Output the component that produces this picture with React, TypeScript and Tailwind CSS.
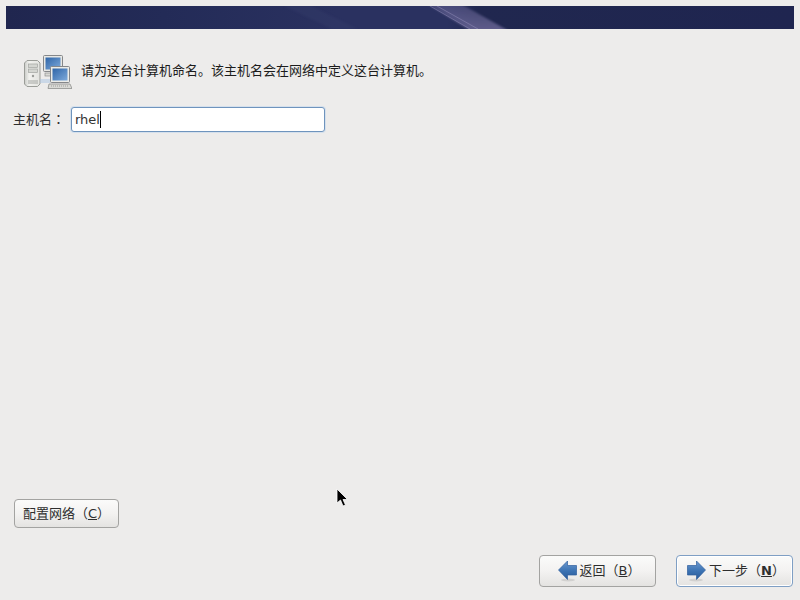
const fontStack = "font-['DejaVu_Sans','Noto_Sans_CJK_SC',sans-serif]";

function Banner() {
  return (
    <div className="mx-[6px] mt-[6px] h-[23px] bg-[#20264f] shrink-0">
      <svg width="788" height="23" viewBox="0 0 788 23" className="block">
        <defs>
          <linearGradient id="bannerGlow" x1="0" x2="1" y1="0" y2="0">
            <stop offset="0" stopColor="#20264f" />
            <stop offset="0.2" stopColor="#232b57" />
            <stop offset="0.42" stopColor="#2a3160" />
            <stop offset="0.56" stopColor="#2a3160" />
            <stop offset="0.6" stopColor="#20274f" />
            <stop offset="1" stopColor="#1f2550" />
          </linearGradient>
          <linearGradient id="streak" x1="0" x2="0" y1="0" y2="1">
            <stop offset="0" stopColor="#7d77a8" stopOpacity="0.5" />
            <stop offset="1" stopColor="#8079ab" stopOpacity="0.95" />
          </linearGradient>
          <filter id="soft" x="-20%" y="-20%" width="140%" height="140%">
            <feGaussianBlur stdDeviation="0.9" />
          </filter>
        </defs>
        <rect width="788" height="23" fill="url(#bannerGlow)" />
        <polygon points="278,0 305,0 352,23 326,23" fill="#363c6b" opacity="0.4" filter="url(#soft)" />
        <polygon points="421,-2 455,-2 503,25 465,25" fill="url(#streak)" opacity="0.7" filter="url(#soft)" />
        <path d="M424 0L464 23M431 0L472 23" stroke="#a49ec9" strokeWidth="1" opacity="0.4" />
      </svg>
    </div>
  );
}

function NetworkIcon() {
  return (
    <svg width="50" height="38" viewBox="0 0 50 38" className="shrink-0">
      <defs>
        <linearGradient id="tower" x1="0" x2="1" y1="0" y2="0">
          <stop offset="0" stopColor="#c9cbc7" />
          <stop offset="0.3" stopColor="#f2f2ef" />
          <stop offset="1" stopColor="#e2e3df" />
        </linearGradient>
        <linearGradient id="screen" x1="0" x2="1" y1="0" y2="1">
          <stop offset="0" stopColor="#2f65a8" />
          <stop offset="1" stopColor="#7eaadb" />
        </linearGradient>
      </defs>
      {/* tower */}
      <path d="M2.5 11 L5 8.5 H15.5 L18 11 V32 L15.5 34.5 H5 L2.5 32 Z" fill="url(#tower)" stroke="#9b9d98" />
      <rect x="6.5" y="12" width="9" height="3.5" fill="#d4d6d1" stroke="#a2a4a0" strokeWidth="0.7" />
      <rect x="6.5" y="17" width="9" height="3.5" fill="#d4d6d1" stroke="#a2a4a0" strokeWidth="0.7" />
      <circle cx="11" cy="24" r="1.2" fill="#9a9c98" />
      <path d="M7 28V32M9 28V32M11 28V32M13 28V32M15 28V32" stroke="#a4a6a2" />
      {/* cables */}
      <path d="M18 28H28M18 30H28" stroke="#a9c4e4" strokeWidth="1.2" />
      {/* back monitor */}
      <rect x="21.5" y="3.5" width="19" height="16" rx="1" fill="#e8e8e4" stroke="#85878a" />
      <rect x="23.5" y="5.5" width="15" height="12" fill="url(#screen)" />
      <rect x="23" y="21" width="8" height="3" fill="#d8d8d4" stroke="#909290" strokeWidth="0.7" />
      {/* front monitor */}
      <rect x="28.5" y="14.5" width="19" height="16" rx="1" fill="#ecece8" stroke="#85878a" />
      <rect x="30.5" y="16.5" width="15" height="12" fill="url(#screen)" />
      <path d="M27 32H48L50 36.5H26Z" fill="#d9d9d5" stroke="#8f918e" strokeWidth="0.8" />
      <path d="M29 34H47" stroke="#8f918e" strokeWidth="0.8" strokeDasharray="1 1" />
    </svg>
  );
}

function ArrowIcon({ dir }: { dir: "left" | "right" }) {
  return (
    <svg width="19" height="22" viewBox="0 0 19 22" className={dir === "left" ? "shrink-0" : "shrink-0 -scale-x-100"}>
      <defs>
        <linearGradient id={`arrow-${dir}`} x1="0" x2="0" y1="0" y2="1">
          <stop offset="0" stopColor="#6d9ad0" />
          <stop offset="0.55" stopColor="#3b72b2" />
          <stop offset="1" stopColor="#2a5a98" />
        </linearGradient>
      </defs>
      <ellipse cx="10" cy="20" rx="7" ry="1.5" fill="#000" opacity="0.1" />
      <path d="M0.5 10 L9.5 1 V5.5 H18.5 V15 H9.5 V19.5 Z" fill={`url(#arrow-${dir})`} stroke="#2f5f9d" strokeWidth="0.7" />
    </svg>
  );
}

function GtkButton({
  children,
  className,
}: {
  children: React.ReactNode;
  className: string;
}) {
  return (
    <button
      className={`flex items-center justify-center rounded-[4px] border bg-gradient-to-b from-[#fbfbfa] via-[#f3f2f1] to-[#e4e3e1] text-[13px] text-[#2e2e2e] ${className}`}
    >
      {children}
    </button>
  );
}

export default function App() {
  return (
    <div className={`relative flex h-[600px] w-[800px] flex-col overflow-hidden bg-[#edeceb] text-[13px] text-[#1c1c1c] ${fontStack}`}>
      <Banner />

      <div className="mt-[20px] flex h-[44px] items-center pl-[22px]">
        <NetworkIcon />
        <span className="mb-[2px] ml-[9px] leading-none">请为这台计算机命名。该主机名会在网络中定义这台计算机。</span>
      </div>

      <div className="mt-[14px] flex items-center pl-[13px]">
        <span className="mb-[2px] w-[58px] leading-none text-[#2e2e2e]">
          主机名<span className="font-['Noto_Sans_CJK_TC',sans-serif]">：</span>
        </span>
        <div className="flex h-[25px] w-[254px] items-center rounded-[3px] border border-[#6f94bd] bg-white pl-[3px] shadow-[0_0_0_1px_#d5e0ec] text-[#333]">
          rhel
          <span className="h-[17px] w-px bg-black" />
        </div>
      </div>

      <div className="flex-1" />

      <div className="pl-[14px]">
        <GtkButton className="h-[29px] w-[105px] border-[#a3a3a1]">
          <span>配置网络（<span className="underline">C</span>）</span>
        </GtkButton>
      </div>

      <div className="mb-[13px] mt-[27px] flex justify-end gap-[20px] pr-[7px]">
        <GtkButton className="h-[32px] w-[117px] gap-[3px] pl-[3px] border-[#a3a3a1]">
          <ArrowIcon dir="left" />
          <span>返回（<span className="underline">B</span>）</span>
        </GtkButton>
        <GtkButton className="h-[32px] w-[117px] gap-[3px] pl-[3px] border-[#7f9fc4] shadow-[inset_0_0_0_1px_#fff]">
          <ArrowIcon dir="right" />
          <span>下一步（<span className="font-bold underline">N</span>）</span>
        </GtkButton>
      </div>

      {/* mouse pointer */}
      <svg width="14" height="20" viewBox="0 0 14 20" className="absolute left-[336px] top-[488px]">
        <path d="M1 1 V15 L4.5 12 L7 18 L9.5 17 L7 11.5 H11.5 Z" fill="#000" stroke="#fff" strokeWidth="0.8" />
      </svg>
    </div>
  );
}
